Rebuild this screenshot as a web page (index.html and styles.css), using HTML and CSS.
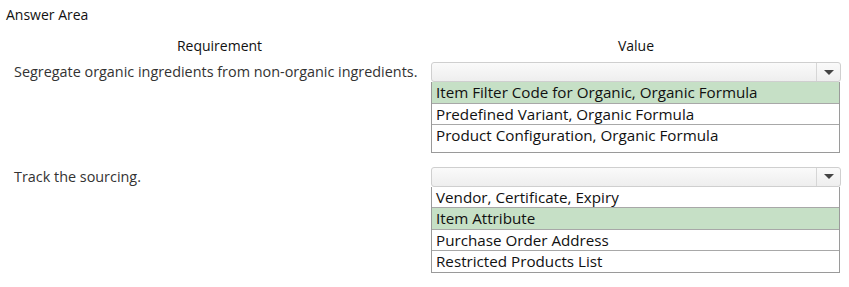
FILE: index.html
```html
<!DOCTYPE html>
<html>
<head>
<meta charset="utf-8">
<link rel="stylesheet" href="styles.css">
</head>
<body>
<div class="page">
  <div class="title">Answer Area</div>
  <div class="grid">
    <div class="head">Requirement</div>
    <div class="head">Value</div>

    <div class="label">Segregate organic ingredients from non-organic ingredients.</div>
    <div class="field">
      <div class="select"><span class="btn"><span class="arrow"></span></span></div>
      <div class="list list-a">
        <div class="opt sel">Item Filter Code for Organic, Organic Formula</div>
        <div class="opt">Predefined Variant, Organic Formula</div>
        <div class="opt">Product Configuration, Organic Formula</div>
      </div>
    </div>

    <div class="label">Track the sourcing.</div>
    <div class="field">
      <div class="select"><span class="btn"><span class="arrow"></span></span></div>
      <div class="list list-b">
        <div class="opt">Vendor, Certificate, Expiry</div>
        <div class="opt sel">Item Attribute</div>
        <div class="opt">Purchase Order Address</div>
        <div class="opt">Restricted Products List</div>
      </div>
    </div>
  </div>
</div>
</body>
</html>
```

FILE: styles.css
```css
html, body {
  margin: 0;
  background: #fff;
}
body {
  font-family: "Open Sans", "Noto Sans", sans-serif;
  color: #222;
}
.page {
  padding: 5px 0 0 6px;
}
.title {
  font-size: 14px;
  line-height: 20px;
  color: #111;
}
.grid {
  display: grid;
  grid-template-columns: 425px 410px;
  margin-top: 11px;
}
.head {
  text-align: center;
  font-size: 14px;
  line-height: 20px;
  color: #111;
  padding-left: 2px;
  padding-bottom: 6px;
}
.head + .head {
  padding-left: 0;
}
.label {
  font-size: 14.4px;
  color: #333;
  padding-left: 8px;
  line-height: 20px;
  padding-top: 0;
}
.field {
  padding-bottom: 14px;
}
.select {
  height: 18px;
  border: 1px solid #cfcfcf;
  border-radius: 3px;
  background: linear-gradient(#fafafa, #eeeeee);
  display: flex;
  justify-content: flex-end;
}
.btn {
  width: 23px;
  border-left: 1px solid #d6d6d6;
  display: flex;
  align-items: center;
  justify-content: center;
}
.arrow {
  width: 0;
  height: 0;
  border-left: 5px solid transparent;
  border-right: 5px solid transparent;
  border-top: 5px solid #444;
}
.list {
  border: 1px solid #9a9a9a;
  border-top: none;
  width: 407px;
}
.list-a {
  padding-bottom: 6px;
}
.opt {
  font-size: 15.2px;
  line-height: 20.5px;
  color: #111;
  padding-left: 4px;
  border-bottom: 1px solid #a8a8a8;
}
.opt:last-child {
  border-bottom: none;
}
.sel {
  background: #c6e0c6;
}
```
